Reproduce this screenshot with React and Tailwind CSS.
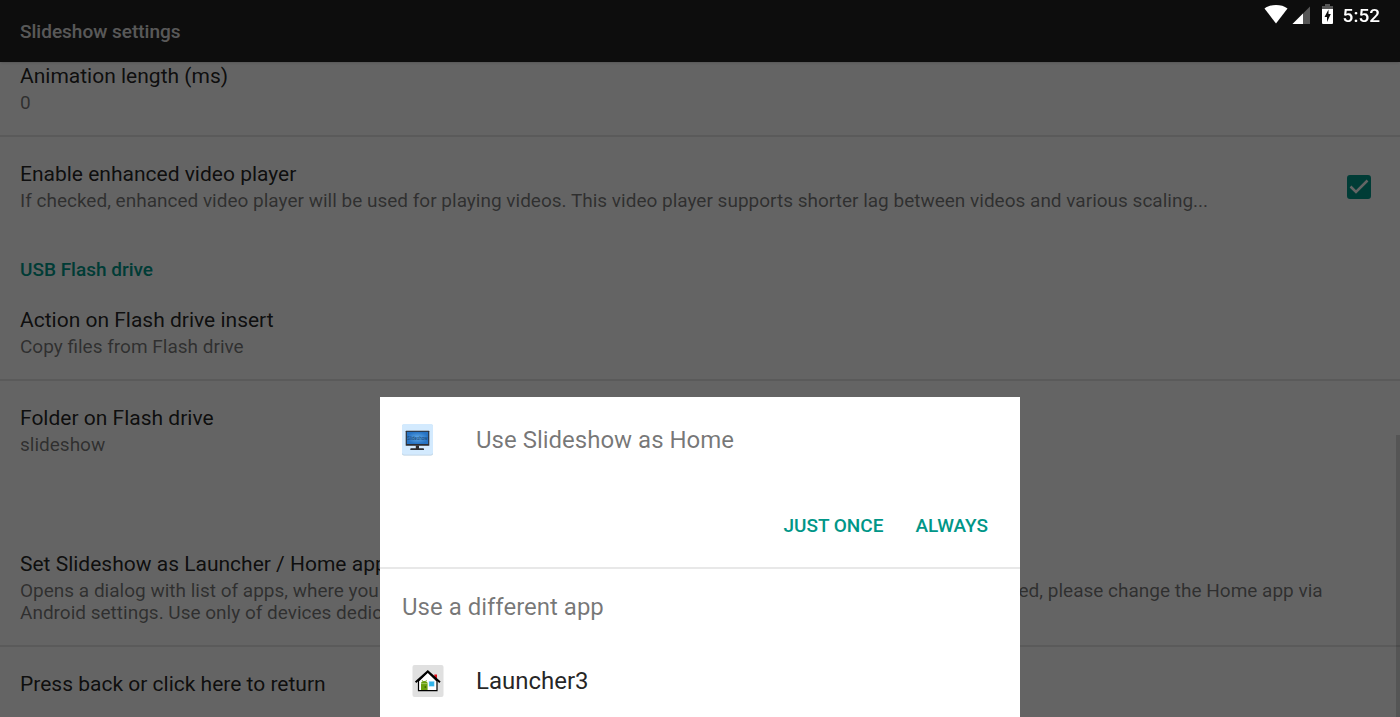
import React, { useState } from 'react';

const WifiIcon = () => (
  <svg width="24" height="20" viewBox="0 0 24 20" aria-hidden="true">
    <path d="M12 19.500 0.500 4.600C3.600 2 7.600 1 12 1s8.400 1 11.500 3.600z" fill="#fff" />
  </svg>
);

const SignalIcon = () => (
  <svg width="18" height="18" viewBox="0 0 18 18" aria-hidden="true">
    <path d="M0.500 18H18V0.500z" fill="#565656" />
    <path d="M0.500 18H11V7.500z" fill="#fff" />
  </svg>
);

const BatteryIcon = () => (
  <svg width="11" height="20" viewBox="0 0 11 20" aria-hidden="true">
    <path d="M3 0h5v2h3v4H0V2h3z" fill="#565656" />
    <path d="M0 5h11v14a1 1 0 0 1-1 1H1a1 1 0 0 1-1-1z" fill="#fff" />
    <path d="M6.500 5.500 2.500 13H5v5l3.800-8H6.500z" fill="#0d0d0d" />
  </svg>
);

const SlideshowIcon = () => (
  <svg width="32" height="32" viewBox="0 0 32 32" aria-hidden="true">
    <defs>
      <radialGradient id="screen">
        <stop offset="0" stopColor="#62abe8" />
        <stop offset="1" stopColor="#2673c4" />
      </radialGradient>
    </defs>
    <rect y="0.400" width="31" height="31" rx="2" fill="#b4cbdd" />
    <rect width="31" height="30.800" rx="2" fill="#d3eafe" />
    <rect x="3.700" y="6.700" width="23.600" height="15" rx="0.500" fill="#2d2d30" />
    <rect x="4.800" y="7.800" width="21.400" height="12.200" fill="url(#screen)" />
    <text x="15.500" y="15.500" fontSize="4.500" textAnchor="middle" fill="#16406e">Slideshow</text>
    <path d="M13.800 21.500h3.200v2.800h4.200q0.800 0 0.800 0.800v0.900H8.300v-0.900q0-0.800 0.800-0.800h4.700z" fill="#2d2d30" />
  </svg>
);

const LauncherIcon = () => (
  <svg width="32" height="32" viewBox="0 0 32 32" aria-hidden="true">
    <rect x="0.500" y="0" width="31" height="32" rx="2" fill="#e0e0e0" />
    <path d="M22.300 9.500h2.700v6l-2.700-2z" fill="#e0101a" />
    <path d="M6.500 16 15.800 7l9.200 9v9.700H6.500z" fill="#fff" stroke="#000" strokeWidth="1.200" />
    <path d="M3.600 17.200 15.800 6.200 28 17.200" fill="none" stroke="#000" strokeWidth="1.900" />
    <path d="M9 18.500q0-2.500 3.300-2.500t3.300 2.500V25H9z" fill="#6a9f0a" />
    <path d="m10 15 1 1.500M14.600 15l-1 1.500" stroke="#6a9f0a" strokeWidth="0.700" />
    <path d="M9 18.600h6.600" stroke="#d6e8b4" strokeWidth="0.500" />
    <circle cx="13.300" cy="22" r="0.800" fill="#2c4a00" />
    <rect x="17" y="16.300" width="5.200" height="5" fill="#2fb4ea" stroke="#b5e2f7" strokeWidth="0.500" />
  </svg>
);

const Preference = ({ title, summary, divider, className = 'pt-6' }) => (
  <button
    type="button"
    className={`block w-full px-5 text-left ${className} ${divider ? 'border-b-2 border-black/10 pb-[21px]' : 'pb-[23px]'}`}
  >
    <span className="block text-[21px] leading-[26px] text-black/87">{title}</span>
    {summary && <span className="mt-[3px] block text-[19px] leading-[22px] text-black/54">{summary}</span>}
  </button>
);

const StatusBar = () => (
  <div className="fixed top-0 right-0 z-30 flex items-start pt-1 pr-5 text-white">
    <WifiIcon />
    <span className="mt-0.5 ml-1"><SignalIcon /></span>
    <span className="mr-2.5 ml-3"><BatteryIcon /></span>
    <span className="text-[19px] leading-6 font-medium">5:52</span>
  </div>
);

const HomeDialog = () => (
  <div className="fixed inset-0 z-20 flex items-end justify-center bg-black/60">
    <div role="dialog" aria-labelledby="dialog-title" className="w-full max-w-[640px] bg-white">
      <div className="flex h-[86px] items-center px-[22px]">
        <SlideshowIcon />
        <h2 id="dialog-title" className="ml-[42px] text-2xl text-black/54">Use Slideshow as Home</h2>
      </div>
      <div className="flex justify-end border-b-2 border-[#e8e8e8] px-4 pt-[19px] pb-[17px]">
        <button type="button" className="h-12 px-4 text-[19px] font-medium text-[#009688]">JUST ONCE</button>
        <button type="button" className="h-12 px-4 text-[19px] font-medium text-[#009688]">ALWAYS</button>
      </div>
      <p className="px-[22px] py-6 text-2xl leading-7 text-black/54">Use a different app</p>
      <button type="button" className="flex h-[72px] w-full items-center px-8 text-2xl text-black/87">
        <LauncherIcon />
        <span className="ml-8">Launcher3</span>
      </button>
    </div>
  </div>
);

const App = () => {
  const [enhanced, setEnhanced] = useState(true);

  return (
    <div className="relative h-screen overflow-hidden bg-[#fafafa] font-[Roboto,sans-serif]">
      <header className="flex h-[62px] items-center bg-[#212121] px-5 pt-0.5 shadow-sm">
        <h1 className="text-[19px] font-medium text-white/87">Slideshow settings</h1>
      </header>

      <main>
        <Preference title="Animation length (ms)" summary="0" divider className="pt-px" />

        <label className="flex items-center justify-between px-5 pt-6 pb-[23px]">
          <span className="min-w-0">
            <span className="block text-[21px] leading-[26px] text-black/87">Enable enhanced video player</span>
            <span className="mt-[3px] block truncate text-[19px] leading-[22px] text-black/54">
              If checked, enhanced video player will be used for playing videos. This video player supports shorter lag between videos and various scaling...
            </span>
          </span>
          <span className="relative mr-[9px] size-6 shrink-0">
            <input
              type="checkbox"
              checked={enhanced}
              onChange={(e) => setEnhanced(e.target.checked)}
              className="block size-6 appearance-none rounded-[3px] border-2 border-[#009688] checked:bg-[#009688]"
            />
            {enhanced && (
              <svg viewBox="0 0 24 24" className="pointer-events-none absolute inset-0 size-6">
                <path d="M3.500 11.500 9 17 20.500 5.500" fill="none" stroke="#fafafa" strokeWidth="2.500" />
              </svg>
            )}
          </span>
        </label>

        <h2 className="px-5 pt-6 pb-0.5 text-[19px] leading-[22px] font-medium text-[#009688]">USB Flash drive</h2>
        <Preference title="Action on Flash drive insert" summary="Copy files from Flash drive" divider />
        <Preference title="Folder on Flash drive" summary="slideshow" />

        <div className="h-12" />
        <Preference
          title="Set Slideshow as Launcher / Home app"
          summary="Opens a dialog with list of apps, where you can pick the default Home app. Select Slideshow. If the dialog is not displayed, please change the Home app via Android settings. Use only of devices dedicated."
          divider
        />
        <Preference title="Press back or click here to return" />
      </main>

      <div className="absolute right-0 bottom-0 h-[282px] w-1 bg-black/15" />
      <HomeDialog />
      <StatusBar />
    </div>
  );
};

export default App;
